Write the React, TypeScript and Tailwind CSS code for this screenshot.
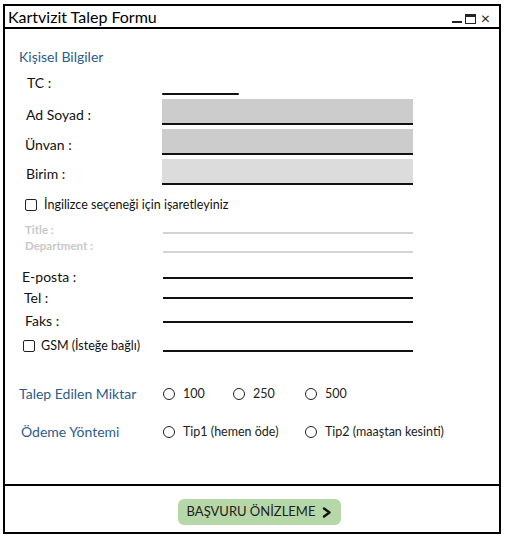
import React from "react";

const font = { fontFamily: "Lato, 'Noto Sans', sans-serif" };

const Checkbox = () => (
  <span className="block w-[12px] h-[12px] border-[1.5px] border-[#222] rounded-[2px] bg-white shrink-0" />
);

const Radio = ({ label }: { label: string }) => (
  <span className="flex items-center gap-[8px]">
    <span className="block w-[12px] h-[12px] rounded-full border-[1.5px] border-[#222] bg-white shrink-0" />
    <span className="text-[12.5px] leading-[14px] text-[#222]">{label}</span>
  </span>
);

const App: React.FC = () => {
  return (
    <div className="w-[507px] h-[539px] bg-white overflow-hidden" style={font}>
      <div className="ml-[3px] mt-[4px] w-[498px] h-[530px] border-2 border-black flex flex-col">
        {/* title bar */}
        <div className="h-[23px] border-b-2 border-black flex items-center justify-between pl-[3px] pr-[9px] shrink-0">
          <span className="text-[16px] leading-[18px] text-black">Kartvizit Talep Formu</span>
          <span className="flex items-end gap-[3px] pt-[2px]">
            <span className="w-[10px] h-[2px] bg-[#222] mb-[1px]" />
            <span className="w-[11px] h-[10px] border-[1.5px] border-t-[3px] border-[#222]" />
            <span className="text-[16px] leading-[12px] text-[#222] ml-[2px]">×</span>
          </span>
        </div>

        {/* body */}
        <div className="h-[455px] shrink-0 flex flex-col text-[#111]">
          <div className="pt-[19px] pl-[14px] h-[37px] text-[14px] leading-[18px] text-[#2e5c8a]">
            Kişisel Bilgiler
          </div>

          {/* TC */}
          <div className="flex h-[31px]">
            <div className="w-[157px] pl-[22px] pt-[9px] text-[14px] leading-[16px]">TC :</div>
            <div className="pt-[27px]">
              <div className="w-[77px] h-[2px] bg-[#111] rounded-full" />
            </div>
          </div>

          {/* Ad Soyad */}
          <div className="flex h-[30px]">
            <div className="w-[157px] pl-[21px] pt-[10px] text-[14px] leading-[16px]">Ad Soyad :</div>
            <div className="pt-[2px]">
              <div className="w-[251px] h-[26px] bg-[#cccccc] border-b-2 border-[#111]" />
            </div>
          </div>

          {/* Ünvan */}
          <div className="flex h-[30px]">
            <div className="w-[157px] pl-[20px] pt-[10px] text-[14px] leading-[16px]">Ünvan :</div>
            <div className="pt-[2px]">
              <div className="w-[251px] h-[26px] bg-[#cccccc] border-b-2 border-[#111]" />
            </div>
          </div>

          {/* Birim */}
          <div className="flex h-[30px]">
            <div className="w-[157px] pl-[21px] pt-[9px] text-[14px] leading-[16px]">Birim :</div>
            <div className="pt-[2px]">
              <div className="w-[251px] h-[26px] bg-[#dcdcdc] border-b-2 border-[#111]" />
            </div>
          </div>

          {/* English option */}
          <div className="flex items-center h-[30px] pt-[6px] pl-[20px] gap-[7px]">
            <Checkbox />
            <span className="text-[12.5px] leading-[14px]">İngilizce seçeneği için işaretleyiniz</span>
          </div>

          {/* Title */}
          <div className="flex h-[21px]">
            <div className="w-[158px] pl-[20px] pt-[6px] text-[11.5px] leading-[14px] font-bold text-[#c8c8c8]">Title :</div>
            <div className="pt-[15px]">
              <div className="w-[250px] h-[2px] bg-[#d4d4d4]" />
            </div>
          </div>

          {/* Department */}
          <div className="flex h-[24px]">
            <div className="w-[158px] pl-[20px] pt-[1px] text-[11.5px] leading-[14px] font-bold text-[#c8c8c8]">Department :</div>
            <div className="pt-[13px]">
              <div className="w-[250px] h-[2px] bg-[#d4d4d4]" />
            </div>
          </div>

          {/* E-posta */}
          <div className="flex h-[26px]">
            <div className="w-[158px] pl-[17px] pt-[7px] text-[14px] leading-[16px]">E-posta :</div>
            <div className="pt-[15px]">
              <div className="w-[250px] h-[2px] bg-[#111]" />
            </div>
          </div>

          {/* Tel */}
          <div className="flex h-[22px]">
            <div className="w-[158px] pl-[19px] pt-[2px] text-[14px] leading-[16px]">Tel :</div>
            <div className="pt-[9px]">
              <div className="w-[250px] h-[2px] bg-[#111]" />
            </div>
          </div>

          {/* Faks */}
          <div className="flex h-[24px]">
            <div className="w-[158px] pl-[20px] pt-[3px] text-[14px] leading-[16px]">Faks :</div>
            <div className="pt-[11px]">
              <div className="w-[250px] h-[2px] bg-[#111]" />
            </div>
          </div>

          {/* GSM */}
          <div className="flex h-[26px]">
            <div className="w-[158px] pl-[18px] pt-[5px]">
              <div className="flex items-center gap-[6px] h-[14px]">
                <Checkbox />
                <span className="text-[12.5px] leading-[14px]">GSM (İsteğe bağlı)</span>
              </div>
            </div>
            <div className="pt-[16px]">
              <div className="w-[250px] h-[2px] bg-[#111]" />
            </div>
          </div>

          {/* Talep Edilen Miktar */}
          <div className="flex items-center h-[28px] mt-[20px]">
            <div className="w-[158px] pl-[14px] text-[14px] leading-[16px] text-[#2e5c8a]">Talep Edilen Miktar</div>
            <div className="w-[70px]"><Radio label="100" /></div>
            <div className="w-[72px]"><Radio label="250" /></div>
            <div><Radio label="500" /></div>
          </div>

          {/* Ödeme Yöntemi */}
          <div className="flex items-center h-[28px] mt-[10px]">
            <div className="w-[158px] pl-[16px] text-[14px] leading-[16px] text-[#2e5c8a]">Ödeme Yöntemi</div>
            <div className="w-[142px]"><Radio label="Tip1 (hemen öde)" /></div>
            <div><Radio label="Tip2 (maaştan kesinti)" /></div>
          </div>
        </div>

        {/* footer */}
        <div className="flex-1 border-t-2 border-black pl-[173px] pt-[13px]">
          <button className="w-[163px] h-[26px] rounded-[6px] bg-[#b6d7a8] flex items-center justify-center gap-[7px] text-[13px] text-[#222]">
            <span>BAŞVURU ÖNİZLEME</span>
            <svg width="10" height="11" viewBox="0 0 10 11" fill="none">
              <path d="M2 1.5 L7.5 5.5 L2 9.5" stroke="#111" strokeWidth="2.4" strokeLinecap="round" strokeLinejoin="round" />
            </svg>
          </button>
        </div>
      </div>
    </div>
  );
};

export default App;
